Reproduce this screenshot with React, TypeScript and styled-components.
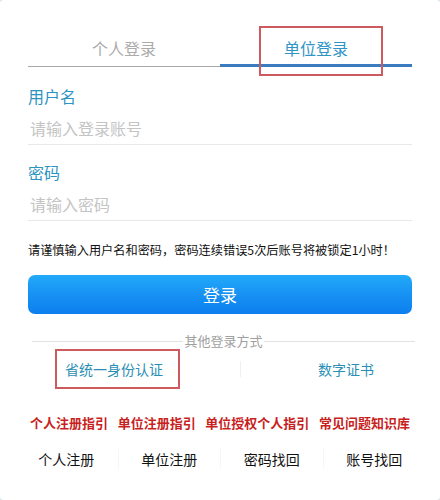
import React, {FC} from 'react'
import styled, {createGlobalStyle} from 'styled-components'

const GlobalStyle = createGlobalStyle`
  html, body {
    margin: 0;
    padding: 0;
    background: #dde4ea;
  }
  * {
    box-sizing: border-box;
  }
`

const FONT = `"Noto Sans CJK SC", "Noto Sans", "Liberation Sans", sans-serif`

type TabType = {
    title: string
    active?: boolean
}

const tabs: TabType[] = [
    {title: '个人登录'},
    {title: '单位登录', active: true},
]

const guides = ['个人注册指引', '单位注册指引', '单位授权个人指引', '常见问题知识库']
const bottomLinks = ['个人注册', '单位注册', '密码找回', '账号找回']

const App: FC = () => {
    return (
        <>
            <GlobalStyle/>
            <Card>
                <Tabs>
                    {tabs.map(t => (
                        <Tab key={t.title} $active={t.active}>
                            {t.title}
                            {t.active && <TabMark/>}
                        </Tab>
                    ))}
                </Tabs>

                <FieldLabel>用户名</FieldLabel>
                <Input placeholder="请输入登录账号"/>
                <FieldLabel $second>密码</FieldLabel>
                <Input type="password" placeholder="请输入密码"/>

                <Warning>请谨慎输入用户名和密码，密码连续错误5次后账号将被锁定1小时！</Warning>

                <LoginButton>登录</LoginButton>

                <OtherTitle><span>其他登录方式</span></OtherTitle>
                <OtherRow>
                    <OtherItem>
                        省统一身份认证
                        <OtherMark/>
                    </OtherItem>
                    <OtherDivider><i/></OtherDivider>
                    <OtherItem>数字证书</OtherItem>
                </OtherRow>

                <Guides>
                    {guides.map(g => <Guide key={g}>{g}</Guide>)}
                </Guides>

                <BottomLinks>
                    {bottomLinks.map(l => <BottomLink key={l}>{l}</BottomLink>)}
                </BottomLinks>
            </Card>
        </>
    )
}
export default App

let Card = styled.div`
  width: 440px;
  height: 500px;
  background: #ffffff;
  border-radius: 4px;
  padding: 26px 28px 0 28px;
  font-family: ${FONT};
  display: flex;
  flex-direction: column;
`

let Tabs = styled.div`
  display: flex;
  align-items: flex-end;
`

let Tab = styled.div<{ $active?: boolean }>`
  position: relative;
  flex: 1;
  height: 41px;
  padding-top: 10px;
  line-height: 24px;
  text-align: center;
  font-size: 16px;
  color: ${p => p.$active ? '#2e95c6' : '#ababab'};
  border-bottom: ${p => p.$active ? '3px solid #3a7cbf' : '1px solid #a8a8a8'};
`

let TabMark = styled.span`
  position: absolute;
  left: 39px;
  top: 0;
  width: 124px;
  height: 50px;
  border: 2px solid #cc5a5e;
`

let FieldLabel = styled.div<{ $second?: boolean }>`
  margin-top: ${p => p.$second ? '16px' : '18px'};
  margin-bottom: 4px;
  font-size: 16px;
  line-height: 22px;
  color: #2d93bf;
`

let Input = styled.input`
  height: 34px;
  border: none;
  border-bottom: 1px solid #e8e8e8;
  outline: none;
  padding: 0 2px;
  font-family: ${FONT};
  font-size: 16px;
  color: #333;
  background: transparent;

  &::placeholder {
    color: #c4c4c4;
  }
`

let Warning = styled.div`
  margin-top: 19px;
  font-size: 12.2px;
  line-height: 20px;
  color: #111;
  white-space: nowrap;
`

let LoginButton = styled.button`
  margin-top: 15px;
  height: 39px;
  border: none;
  border-radius: 7px;
  background: linear-gradient(to bottom, #22aaf9 0%, #1791f3 50%, #0c7fee 100%);
  color: #ffffff;
  font-family: ${FONT};
  font-size: 17px;
  cursor: pointer;
`

let OtherTitle = styled.div`
  margin-top: 19px;
  margin-left: 4px;
  margin-right: -3px;
  height: 16px;
  display: flex;
  align-items: center;
  justify-content: center;
  background: linear-gradient(#e2e2e2, #e2e2e2) center / 100% 1px no-repeat;

  span {
    background: #fff;
    font-size: 13px;
    line-height: 16px;
    color: #a0a0a0;
    padding: 0 1px;
  }
`

let OtherRow = styled.div`
  display: grid;
  grid-template-columns: 172px 80px 1fr;
  height: 40px;
  align-items: center;
`

let OtherItem = styled.div`
  position: relative;
  height: 40px;
  line-height: 40px;
  text-align: center;
  font-size: 14px;
  color: #2b8fb5;
`

let OtherMark = styled.span`
  position: absolute;
  left: 27px;
  top: 0;
  width: 125px;
  height: 40px;
  border: 2px solid #cc5a5e;
`

let OtherDivider = styled.div`
  display: flex;
  justify-content: center;

  i {
    width: 1px;
    height: 16px;
    background: #f0f0f0;
  }
`

let Guides = styled.div`
  margin-top: 24px;
  display: flex;
  justify-content: space-between;
  padding: 0 2px;
`

let Guide = styled.span`
  font-size: 13px;
  line-height: 20px;
  font-weight: bold;
  color: #c81f1f;
`

let BottomLinks = styled.div`
  margin: 16px -13px 0 -13px;
  display: grid;
  grid-template-columns: repeat(4, 1fr);
`

let BottomLink = styled.div`
  text-align: center;
  font-size: 14px;
  line-height: 20px;
  color: #111;
  border-left: 1px solid #f6f6f6;

  &:first-child {
    border-left: none;
  }
`
